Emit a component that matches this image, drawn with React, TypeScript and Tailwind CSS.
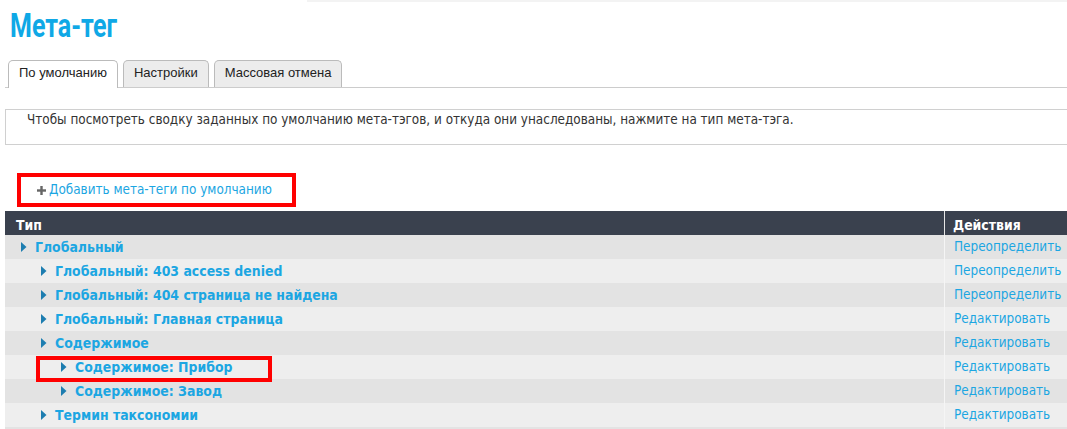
import React from "react";

type Row = { label: string; level: number; action: string; highlight?: boolean };

const rows: Row[] = [
  { label: "Глобальный", level: 0, action: "Переопределить" },
  { label: "Глобальный: 403 access denied", level: 1, action: "Переопределить" },
  { label: "Глобальный: 404 страница не найдена", level: 1, action: "Переопределить" },
  { label: "Глобальный: Главная страница", level: 1, action: "Редактировать" },
  { label: "Содержимое", level: 1, action: "Редактировать" },
  { label: "Содержимое: Прибор", level: 2, action: "Редактировать", highlight: true },
  { label: "Содержимое: Завод", level: 2, action: "Редактировать" },
  { label: "Термин таксономии", level: 1, action: "Редактировать" },
  { label: "", level: 1, action: "" },
];

const indent = ["pl-[16px]", "pl-[36px]", "pl-[56px]"];

function Triangle() {
  return (
    <svg width="6" height="10" viewBox="0 0 6 10" className="shrink-0">
      <polygon points="0,0 5.5,5 0,10" fill="#1d7db0" />
    </svg>
  );
}

export default function App() {
  return (
    <div className="w-full overflow-hidden bg-white">
      <div className="w-[1080px] px-[5px] font-['DejaVu_Sans_Condensed','DejaVu_Sans',sans-serif] text-[#333]">
        <div className="ml-[302px] h-[2px] bg-[#f3f3f3]" />
        <div className="pt-[3px] pl-[5px]">
          <h1 className="origin-left scale-x-[0.735] font-['Roboto',sans-serif] text-[34px] font-bold leading-[40px] text-[#0fa8e6] whitespace-nowrap">
            Мета-тег
          </h1>
        </div>

        <div className="mt-[15px] flex items-end gap-[5px] border-b border-[#cccccc] pl-[3px] font-['Liberation_Sans',Arial,sans-serif] text-[13px] leading-[16px] text-[#222]">
          <div className="-mb-px rounded-t-[5px] border border-b-0 border-[#bbbbbb] bg-white px-[10px] pt-[4px] pb-[7px]">
            По умолчанию
          </div>
          <div className="rounded-t-[5px] border border-b-0 border-[#bbbbbb] bg-[#ececec] px-[10px] pt-[4px] pb-[6px]">
            Настройки
          </div>
          <div className="rounded-t-[5px] border border-b-0 border-[#bbbbbb] bg-[#ececec] px-[10px] pt-[4px] pb-[6px]">
            Массовая отмена
          </div>
        </div>

        <div className="mt-[21px] h-[36px] border border-[#d0d0d0] pl-[21px] pt-[1px] text-[13.4px] leading-[18px]">
          Чтобы посмотреть сводку заданных по умолчанию мета-тэгов, и откуда они унаследованы, нажмите на тип мета-тэга.
        </div>

        <div className="ml-[12px] mt-[28px] flex h-[34px] w-[279px] items-center border-[4px] border-[#ff0000] pl-[16px]">
          <svg width="9" height="9" viewBox="0 0 9 9" className="mr-[3px] shrink-0">
            <rect x="3.3" y="0" width="2.4" height="9" fill="#666" />
            <rect x="0" y="3.3" width="9" height="2.4" fill="#666" />
          </svg>
          <a className="text-[13.4px] leading-[18px] text-[#1ca6e2] whitespace-nowrap">
            Добавить мета-теги по умолчанию
          </a>
        </div>

        <div className="mt-[4px]">
          <div className="grid h-[24px] grid-cols-[939px_1fr] bg-[#3a414e] text-[13.9px] font-bold leading-[18px] text-white">
            <div className="pl-[11px] pt-[5px]">Тип</div>
            <div className="border-l border-[#e6e6e6] pl-[8px] pt-[5px]">Действия</div>
          </div>
          {rows.map((r, i) => (
            <div
              key={i}
              className={`relative grid h-[24px] grid-cols-[939px_1fr] ${i % 2 === 0 ? "bg-[#e3e3e3]" : "bg-[#eeeeee]"}`}
            >
              <div className={`flex items-center gap-[8px] ${indent[r.level]}`}>
                {r.label && <Triangle />}
                <a className="text-[13.9px] font-bold leading-[18px] text-[#1ca6e2] whitespace-nowrap">{r.label}</a>
              </div>
              <div className="flex items-center border-l border-[#f5f5f5] pl-[9px]">
                <a className="text-[13.4px] leading-[18px] text-[#1ca6e2] whitespace-nowrap">{r.action}</a>
              </div>
              {r.highlight && (
                <div className="pointer-events-none absolute left-[31px] top-[1px] z-10 h-[26px] w-[236px] border-[4px] border-[#ff0000]" />
              )}
            </div>
          ))}
        </div>
      </div>
    </div>
  );
}
